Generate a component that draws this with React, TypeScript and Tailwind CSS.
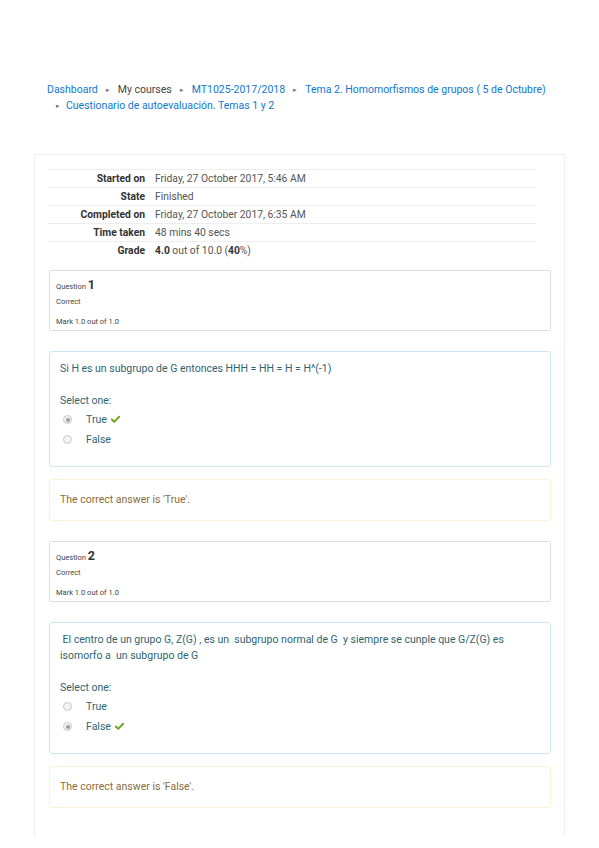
import { Check } from "lucide-react";

const rows = [
  { label: "Started on", value: <>Friday, 27 October 2017, 5:46 AM</> },
  { label: "State", value: <>Finished</> },
  { label: "Completed on", value: <>Friday, 27 October 2017, 6:35 AM</> },
  { label: "Time taken", value: <>48 mins 40 secs</> },
  {
    label: "Grade",
    value: (
      <>
        <b className="font-bold text-[#333]">4.0</b> out of 10.0 (<b className="font-bold text-[#333]">40</b>%)
      </>
    ),
  },
];

function Radio({ checked }: { checked: boolean }) {
  return (
    <span className="w-[9px] h-[9px] rounded-full border border-[#c8c8c8] bg-[#f4f4f4] flex items-center justify-center shrink-0">
      {checked && <span className="w-[4px] h-[4px] rounded-full bg-[#9a9a9a]" />}
    </span>
  );
}

function QuestionBlock({
  num,
  text,
  answer,
}: {
  num: number;
  text: React.ReactNode;
  answer: "True" | "False";
}) {
  return (
    <div className="flex flex-col">
      <div className="border border-[#dedede] rounded-[2px] px-[6px] pt-[5px] h-[61px] text-[#444]">
        <div className="flex items-baseline gap-[2px]">
          <span className="text-[7.5px]">Question</span>
          <span className="text-[12.5px] font-bold text-[#333]">{num}</span>
        </div>
        <div className="text-[7.5px] mt-[2px]">Correct</div>
        <div className="text-[7.5px] mt-[8px]">Mark 1.0 out of 1.0</div>
      </div>

      <div className="mt-[20px] border border-[#cfe6f2] rounded-[3px] px-[10px] pt-[9px] pb-[16px] text-[#2f6473] text-[10.5px]">
        <div className="leading-[16px] pr-[30px]">{text}</div>
        <div className="mt-[17px] leading-[14px]">Select one:</div>
        <div className="mt-[2px]">
          {(["True", "False"] as const).map((opt) => (
            <div key={opt} className="flex items-center h-[20px] pl-[3px]">
              <Radio checked={opt === answer} />
              <span className="ml-[14px]">{opt}</span>
              {opt === answer && <Check size={11} strokeWidth={4} className="ml-[3px] text-[#6aa316]" />}
            </div>
          ))}
        </div>
      </div>

      <div className="mt-[12px] border border-[#fcf1d4] rounded-[3px] h-[42px] px-[10px] flex items-center text-[#8a6d3b] text-[10.5px]">
        The correct answer is '{answer}'.
      </div>
    </div>
  );
}

export default function App() {
  return (
    <div className="w-[599px] min-h-[848px] bg-white font-['Roboto',sans-serif] text-[#373a3c]">
      {/* Breadcrumb */}
      <div className="pt-[82px] pl-[47px] pr-[30px] text-[10.5px] leading-[16px]">
        <div className="flex items-center whitespace-nowrap">
          <span className="text-[#1177d1]">Dashboard</span>
          <span className="mx-[8px] text-[7px] text-[#777]">▸</span>
          <span className="text-[#444]">My courses</span>
          <span className="mx-[8px] text-[7px] text-[#777]">▸</span>
          <span className="text-[#1177d1]">MT1025-2017/2018</span>
          <span className="mx-[8px] text-[7px] text-[#777]">▸</span>
          <span className="text-[#1177d1]">Tema 2. Homomorfismos de grupos ( 5 de Octubre)</span>
        </div>
        <div className="flex items-center whitespace-nowrap">
          <span className="ml-[9px] mr-[6px] text-[7px] text-[#777]">▸</span>
          <span className="text-[#1177d1]">Cuestionario de autoevaluación. Temas 1 y 2</span>
        </div>
      </div>

      {/* Main card */}
      <div className="mt-[40px] ml-[34px] w-[531px] h-[681px] border border-[#efefef] border-b-0 pl-[13px] pr-[14px] pt-[14px]">
        <table className="w-[488px] text-[10.3px] border-collapse">
          <tbody>
            {rows.map((r) => (
              <tr key={r.label} className="border-t border-[#eceeef] h-[18px]">
                <th className="w-[102px] text-right pr-[5px] font-bold text-[#333] whitespace-nowrap">{r.label}</th>
                <td className="pl-[5px] text-[#555]">{r.value}</td>
              </tr>
            ))}
          </tbody>
        </table>

        <div className="mt-[10px] ml-[1px] w-[502px] flex flex-col gap-[20px]">
          <QuestionBlock num={1} text={<>Si H es un subgrupo de G entonces HHH = HH = H = H^(-1)</>} answer="True" />
          <QuestionBlock
            num={2}
            text={
              <>
                &nbsp;El centro de un grupo G, Z(G) , es un&nbsp; subgrupo normal de G&nbsp; y siempre se cunple que G/Z(G) es isomorfo a&nbsp; un subgrupo de G
              </>
            }
            answer="False"
          />
        </div>
      </div>
    </div>
  );
}
